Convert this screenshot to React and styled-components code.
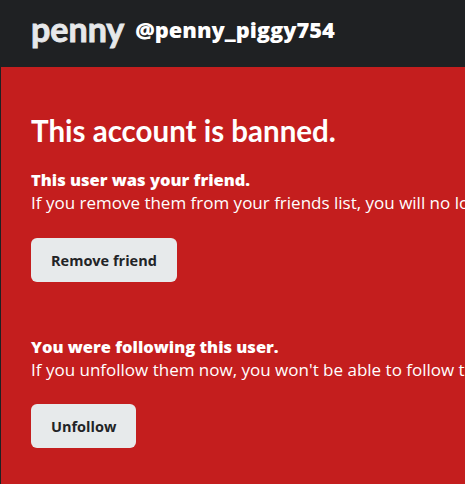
import React from 'react';
import styled, { createGlobalStyle } from 'styled-components';

const GlobalStyle = createGlobalStyle`
  html, body {
    margin: 0;
    padding: 0;
    background: #c41e1e;
    overflow: hidden;
  }
`;

const Page = styled.div`
  width: 465px;
  height: 484px;
  background: #c41e1e;
  border-left: 1px solid #1f2123;
  box-sizing: border-box;
  overflow: hidden;
`;

const Header = styled.header`
  display: flex;
  align-items: flex-start;
  gap: 11px;
  height: 67px;
  padding: 9px 30px 0;
  background: #1f2123;
  box-sizing: border-box;
  white-space: nowrap;
`;

const DisplayName = styled.h1`
  margin: 0;
  line-height: 40px;
  font-family: Lato, sans-serif;
  font-weight: 700;
  font-size: 34px;
  color: #e6e8ea;
  -webkit-text-stroke: 0.9px #e6e8ea;
`;

const Handle = styled.span`
  margin-top: 6px;
  line-height: 29px;
  font-family: "Open Sans", sans-serif;
  font-weight: 800;
  font-size: 21.8px;
  color: #ffffff;
`;

const Content = styled.main`
  padding: 44px 30px 0;
  color: #ffffff;
  white-space: nowrap;
`;

const Title = styled.h2`
  margin: 0 0 17px;
  font-family: Lato, sans-serif;
  font-weight: 700;
  font-size: 29.5px;
  line-height: 40px;
`;

const Section = styled.section`
  margin-bottom: ${(p) => p.$gap || 0}px;
`;

const Lead = styled.div`
  font-family: "Open Sans", sans-serif;
  font-weight: 800;
  font-size: 16.5px;
  line-height: 23px;
`;

const Text = styled.p`
  margin: 0 0 ${(p) => p.$gap || 24}px;
  font-family: "Open Sans", sans-serif;
  font-size: 17px;
  line-height: 23px;
`;

const Button = styled.button`
  display: block;
  height: 44px;
  padding: 0 20px;
  border: none;
  border-radius: 6px;
  background: #e7eaeb;
  color: #222426;
  font-family: "Open Sans", sans-serif;
  font-weight: 700;
  font-size: 14.5px;
  cursor: pointer;
`;

export default function App() {
  return (
    <Page>
      <GlobalStyle />
      <Header>
        <DisplayName>penny</DisplayName>
        <Handle>@penny_piggy754</Handle>
      </Header>
      <Content>
        <Title>This account is banned.</Title>
        <Section $gap={53}>
          <Lead>This user was your friend.</Lead>
          <Text>If you remove them from your friends list, you will no longer be able to add them back.</Text>
          <Button>Remove friend</Button>
        </Section>
        <Section>
          <Lead>You were following this user.</Lead>
          <Text $gap={23}>If you unfollow them now, you won't be able to follow them again.</Text>
          <Button>Unfollow</Button>
        </Section>
      </Content>
    </Page>
  );
}
